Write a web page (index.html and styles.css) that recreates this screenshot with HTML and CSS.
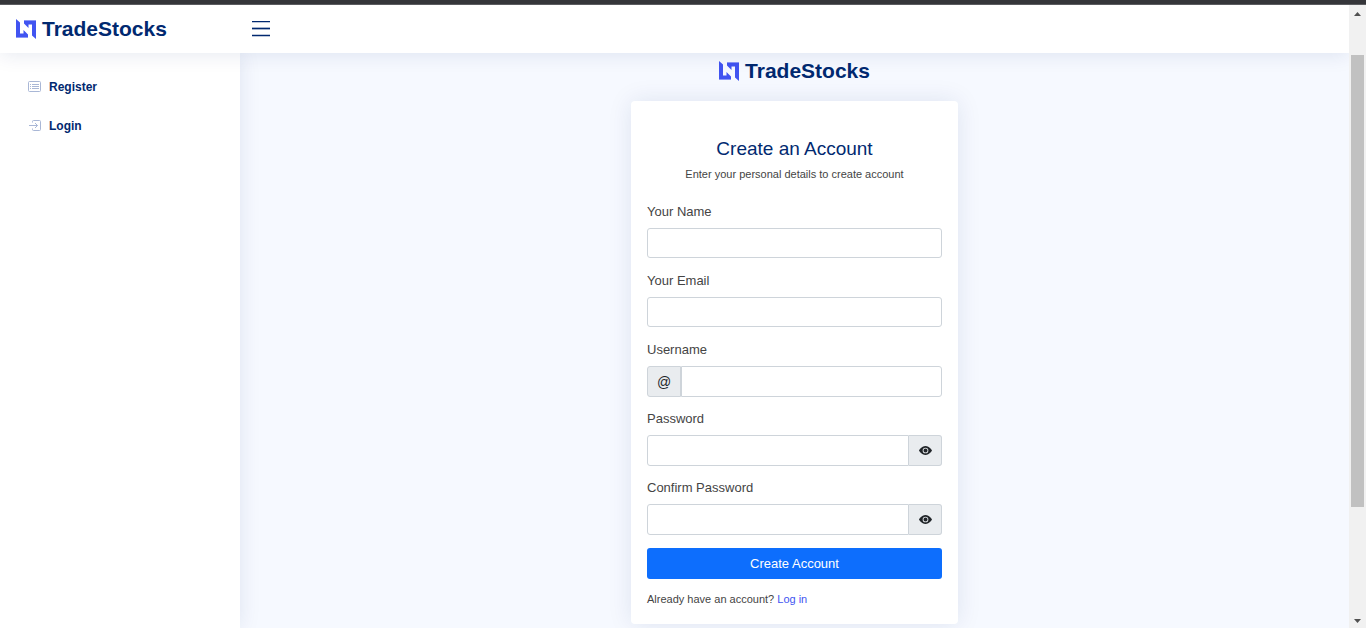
FILE: index.html
```html
<!DOCTYPE html>
<html lang="en">
<head>
<meta charset="utf-8">
<meta name="viewport" content="width=device-width, initial-scale=1">
<title>TradeStocks - Register</title>
<link rel="stylesheet" href="styles.css">
</head>
<body>
<svg class="sprite" aria-hidden="true">
  <symbol id="logo" viewBox="0 0 20 20">
    <path fill="#4154f1" d="M0 0L4 3.500V14.500H7.500V11L12 15.500V18H0Z"/>
    <path fill="#4154f1" d="M8 2H20V20L16 16.500V5.500H12.500V9L8 4.500Z"/>
    <path fill="#8b97f7" d="M0 18H12V19H0ZM8 1H20V2H8Z"/>
  </symbol>
  <symbol id="eye" viewBox="0 0 16 16">
    <path d="M10.500 8a2.500 2.500 0 1 1-5 0 2.500 2.500 0 0 1 5 0z"/>
    <path d="M0 8s3-5.500 8-5.500S16 8 16 8s-3 5.500-8 5.500S0 8 0 8zm8 3.500a3.500 3.500 0 1 0 0-7 3.500 3.500 0 0 0 0 7z"/>
  </symbol>
</svg>
<div class="window-edge"></div>
<div class="viewport">
  <div class="app">
    <header class="header">
      <a class="logo header-logo" href="#"><svg class="logo-mark" aria-hidden="true"><use href="#logo"/></svg><span>TradeStocks</span></a>
      <button class="menu-toggle" type="button" aria-label="Toggle sidebar">
        <svg viewBox="0 0 18 16" aria-hidden="true"><path d="M0 .5H18M0 14.500H18" stroke="currentColor" stroke-width="1.300"/><path d="M0 7.500H18" stroke="currentColor" stroke-width="1.700"/></svg>
      </button>
    </header>
    <div class="body">
      <nav class="sidebar" aria-label="Main">
        <a class="nav-link" href="#">
          <svg class="nav-icon" viewBox="0 0 13 13" aria-hidden="true"><rect x=".5" y="1.500" width="12" height="10" rx="1"/><path d="M4 4.500H11M4 6.500H11M4 8.500H11M2 4.500H3M2 6.500H3M2 8.500H3"/></svg>
          <span>Register</span>
        </a>
        <a class="nav-link" href="#">
          <svg class="nav-icon" viewBox="0 0 13 13" aria-hidden="true"><path d="M4.500 3.500V2.500a1 1 0 0 1 1-1H11.500a1 1 0 0 1 1 1V10.500a1 1 0 0 1-1 1H5.500a1 1 0 0 1-1-1V9.500M1 6.500H9.500M7 4L9.500 6.500L7 9"/></svg>
          <span>Login</span>
        </a>
      </nav>
      <main class="main">
        <a class="logo" href="#"><svg class="logo-mark" aria-hidden="true"><use href="#logo"/></svg><span>TradeStocks</span></a>
        <section class="card">
          <h1 class="card-title">Create an Account</h1>
          <p class="card-subtitle">Enter your personal details to create account</p>
          <form class="form">
            <div class="fields">
              <div class="field">
                <label for="name">Your Name</label>
                <div class="control"><input id="name" type="text"></div>
              </div>
              <div class="field">
                <label for="email">Your Email</label>
                <div class="control"><input id="email" type="email"></div>
              </div>
              <div class="field">
                <label for="username">Username</label>
                <div class="control"><span class="addon addon-start">@</span><input id="username" type="text"></div>
              </div>
              <div class="field">
                <label for="password">Password</label>
                <div class="control"><input id="password" type="password"><button class="addon" type="button" aria-label="Show password"><svg class="eye" aria-hidden="true"><use href="#eye"/></svg></button></div>
              </div>
              <div class="field">
                <label for="confirm">Confirm Password</label>
                <div class="control"><input id="confirm" type="password"><button class="addon" type="button" aria-label="Show confirmed password"><svg class="eye" aria-hidden="true"><use href="#eye"/></svg></button></div>
              </div>
            </div>
            <button class="submit" type="submit">Create Account</button>
            <p class="login-note">Already have an account? <a href="#">Log in</a></p>
          </form>
        </section>
      </main>
    </div>
  </div>
  <div class="scrollbar" aria-hidden="true">
    <svg class="arrow" viewBox="0 0 7 4"><path d="M0 4L3.500 0L7 4Z"/></svg>
    <div class="track"><div class="thumb"></div></div>
    <svg class="arrow" viewBox="0 0 7 4"><path d="M0 0L3.500 4L7 0Z"/></svg>
  </div>
</div>
</body>
</html>
```
FILE: styles.css
```css
* { box-sizing: border-box; }

body {
  margin: 0;
  min-height: 100vh;
  display: flex;
  flex-direction: column;
  background: #f6f9ff;
  color: #444;
  font-family: "Liberation Sans", Arial, sans-serif;
  font-size: 13px;
}

a { color: #4154f1; text-decoration: none; }
button, input { font: inherit; }
.sprite { display: none; }

.window-edge {
  height: 5px;
  background: #35363a;
  border-bottom: 1px solid #5b5c60;
}

.viewport { flex: 1; display: flex; }
.app { flex: 1; min-width: 0; display: flex; flex-direction: column; overflow: hidden; }

.header {
  position: relative;
  z-index: 2;
  height: 48px;
  display: flex;
  align-items: center;
  padding-left: 16px;
  background: #fff;
  box-shadow: 0 2px 20px rgba(1, 41, 112, 0.1);
}

.logo {
  display: flex;
  align-items: center;
  gap: 6px;
  color: #012970;
  font-size: 21px;
  line-height: 24px;
  font-weight: 700;
}
.logo-mark { width: 20px; height: 20px; }
.header-logo { width: 236px; }

.menu-toggle {
  display: flex;
  padding: 0;
  border: 0;
  background: none;
  color: #012970;
}
.menu-toggle svg { width: 18px; height: 16px; }

.body { flex: 1; display: flex; }

.sidebar {
  position: relative;
  z-index: 1;
  width: 240px;
  padding: 16px;
  background: #fff;
  box-shadow: 0 0 20px rgba(1, 41, 112, 0.1);
}
.nav-link {
  display: flex;
  align-items: center;
  gap: 8px;
  height: 35px;
  margin-bottom: 4px;
  padding-left: 12px;
  color: #012970;
  font-size: 12px;
  font-weight: 700;
}
.nav-icon {
  width: 13px;
  height: 13px;
  fill: none;
  stroke: #a9b7d6;
}

.main {
  flex: 1;
  display: flex;
  flex-direction: column;
  align-items: center;
  gap: 18px;
  padding: 6px 12px 4px;
}

.card {
  width: 100%;
  max-width: 327px;
  padding: 36px 16px 17px;
  border-radius: 4px;
  background: #fff;
  box-shadow: 0 0 24px rgba(1, 41, 112, 0.1);
}
.card-title {
  margin: 0;
  color: #012970;
  font-size: 19px;
  line-height: 24px;
  font-weight: 400;
  text-align: center;
}
.card-subtitle {
  margin: 4px 0 19px;
  font-size: 11px;
  line-height: 18px;
  text-align: center;
}

.form { display: flex; flex-direction: column; gap: 13px; }
.fields { display: flex; flex-direction: column; gap: 12px; }
.field { min-height: 57px; }
.field label { display: block; margin-bottom: 6px; line-height: 20px; }
.control { display: flex; height: 30px; }
.control:has(.addon) { height: 31px; }
.control input {
  flex: 1;
  min-width: 0;
  padding: 4px 10px;
  border: 1px solid #ced4da;
  border-radius: 3px;
  background: #fff;
  color: #212529;
}
.addon {
  width: 33px;
  display: flex;
  align-items: center;
  justify-content: center;
  padding: 0;
  border: 1px solid #ced4da;
  border-left: 0;
  border-radius: 0 3px 3px 0;
  background: #e9ecef;
  color: #212529;
  font-size: 14px;
}
.addon-start { width: 34px; border-left: 1px solid #ced4da; border-radius: 3px 0 0 3px; }
.control .addon-start + input { border-radius: 0 3px 3px 0; }
.control input:has(+ .addon) { border-radius: 3px 0 0 3px; }
.eye { width: 13px; height: 13px; fill: currentColor; }

.submit {
  height: 31px;
  border: 0;
  border-radius: 3px;
  background: #0d6efd;
  color: #fff;
}
.login-note { margin: 0; font-size: 11px; line-height: 15px; }

.scrollbar {
  width: 17px;
  display: flex;
  flex-direction: column;
  align-items: center;
  justify-content: space-between;
  padding: 7px 0 5px;
  background: #f1f1f1;
}
.arrow { width: 7px; height: 4px; fill: #505050; }
.track { flex: 1; width: 13px; padding: 39px 0 32px; display: flex; flex-direction: column; }
.thumb { height: 85%; background: #c1c1c1; }
```
